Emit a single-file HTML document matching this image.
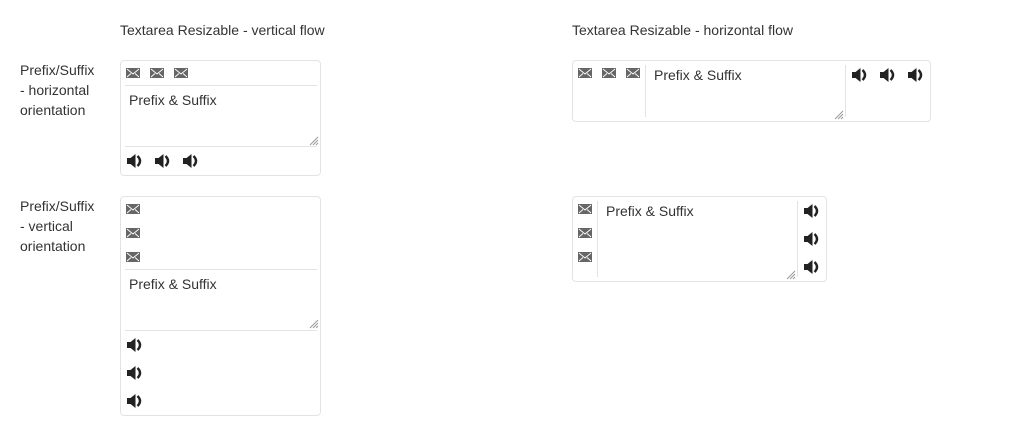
<!DOCTYPE html>
<html><head><style>
body{margin:0;width:1024px;height:436px;background:#fff;font-family:"Liberation Sans",sans-serif;font-size:14px;color:#333;position:relative;overflow:hidden}
.a{position:absolute}
.t{position:absolute;white-space:nowrap;line-height:20px}
.box{position:absolute;border:1px solid #e3e3e3;border-radius:4px;box-sizing:border-box}
.hl{position:absolute;height:1px;background:#e3e3e3}
.vl{position:absolute;width:1px;background:#e3e3e3}
</style></head><body>
<svg width="0" height="0" style="position:absolute">
<defs>
<symbol id="env" viewBox="0 0 14 10"><rect width="14" height="10" fill="#666"/><path d="M1 1 L7 6 L13 1 M1 9 L5 5.5 M13 9 L9 5.5" stroke="#fff" stroke-width="0.9" fill="none"/></symbol>
<symbol id="spk" viewBox="0 0 17 16"><path d="M1 5 H4.5 L9.5 1 V15 L4.5 11 H1 Z" fill="#222"/><path d="M11.5 3 Q16.5 8 11.5 13" stroke="#222" stroke-width="2.4" fill="none"/></symbol>
<symbol id="grip" viewBox="0 0 10 10"><path d="M9 1 L1 9 M9 4 L4 9 M9 7 L7 9" stroke="#999" stroke-width="1"/></symbol>
</defs></svg>

<div class="t" style="left:120px;top:20px">Textarea Resizable - vertical flow</div>
<div class="t" style="left:572px;top:20px">Textarea Resizable - horizontal flow</div>
<div class="t" style="left:20px;top:60px">Prefix/Suffix<br>- horizontal<br>orientation</div>
<div class="t" style="left:20px;top:196px">Prefix/Suffix<br>- vertical<br>orientation</div>

<div class="box" style="left:120px;top:60px;width:201px;height:116px"></div>
<svg class="a" style="left:126px;top:68px" width="14" height="10"><use href="#env"/></svg>
<svg class="a" style="left:150px;top:68px" width="14" height="10"><use href="#env"/></svg>
<svg class="a" style="left:174px;top:68px" width="14" height="10"><use href="#env"/></svg>
<div class="hl" style="left:125px;top:85px;width:192px"></div>
<div class="t" style="left:129px;top:90px">Prefix &amp; Suffix</div>
<svg class="a" style="left:309px;top:136px" width="10" height="10"><use href="#grip"/></svg>
<div class="hl" style="left:125px;top:146px;width:192px"></div>
<svg class="a" style="left:126px;top:153px" width="17" height="16"><use href="#spk"/></svg>
<svg class="a" style="left:154px;top:153px" width="17" height="16"><use href="#spk"/></svg>
<svg class="a" style="left:182px;top:153px" width="17" height="16"><use href="#spk"/></svg>

<div class="box" style="left:572px;top:60px;width:359px;height:62px"></div>
<svg class="a" style="left:578px;top:68px" width="14" height="10"><use href="#env"/></svg>
<svg class="a" style="left:602px;top:68px" width="14" height="10"><use href="#env"/></svg>
<svg class="a" style="left:626px;top:68px" width="14" height="10"><use href="#env"/></svg>
<div class="vl" style="left:645px;top:65px;height:52px"></div>
<div class="t" style="left:654px;top:65px">Prefix &amp; Suffix</div>
<svg class="a" style="left:834px;top:110px" width="10" height="10"><use href="#grip"/></svg>
<div class="vl" style="left:845px;top:65px;height:52px"></div>
<svg class="a" style="left:851px;top:67px" width="17" height="16"><use href="#spk"/></svg>
<svg class="a" style="left:879px;top:67px" width="17" height="16"><use href="#spk"/></svg>
<svg class="a" style="left:907px;top:67px" width="17" height="16"><use href="#spk"/></svg>

<div class="box" style="left:120px;top:196px;width:201px;height:220px"></div>
<svg class="a" style="left:126px;top:204px" width="14" height="10"><use href="#env"/></svg>
<svg class="a" style="left:126px;top:228px" width="14" height="10"><use href="#env"/></svg>
<svg class="a" style="left:126px;top:252px" width="14" height="10"><use href="#env"/></svg>
<div class="hl" style="left:125px;top:269px;width:192px"></div>
<div class="t" style="left:129px;top:274px">Prefix &amp; Suffix</div>
<svg class="a" style="left:309px;top:319px" width="10" height="10"><use href="#grip"/></svg>
<div class="hl" style="left:125px;top:330px;width:192px"></div>
<svg class="a" style="left:126px;top:337px" width="17" height="16"><use href="#spk"/></svg>
<svg class="a" style="left:126px;top:365px" width="17" height="16"><use href="#spk"/></svg>
<svg class="a" style="left:126px;top:393px" width="17" height="16"><use href="#spk"/></svg>

<div class="box" style="left:572px;top:196px;width:255px;height:86px"></div>
<svg class="a" style="left:578px;top:204px" width="14" height="10"><use href="#env"/></svg>
<svg class="a" style="left:578px;top:228px" width="14" height="10"><use href="#env"/></svg>
<svg class="a" style="left:578px;top:252px" width="14" height="10"><use href="#env"/></svg>
<div class="vl" style="left:597px;top:201px;height:76px"></div>
<div class="t" style="left:606px;top:201px">Prefix &amp; Suffix</div>
<svg class="a" style="left:786px;top:270px" width="10" height="10"><use href="#grip"/></svg>
<div class="vl" style="left:797px;top:201px;height:76px"></div>
<svg class="a" style="left:803px;top:203px" width="17" height="16"><use href="#spk"/></svg>
<svg class="a" style="left:803px;top:231px" width="17" height="16"><use href="#spk"/></svg>
<svg class="a" style="left:803px;top:259px" width="17" height="16"><use href="#spk"/></svg>
</body></html>
